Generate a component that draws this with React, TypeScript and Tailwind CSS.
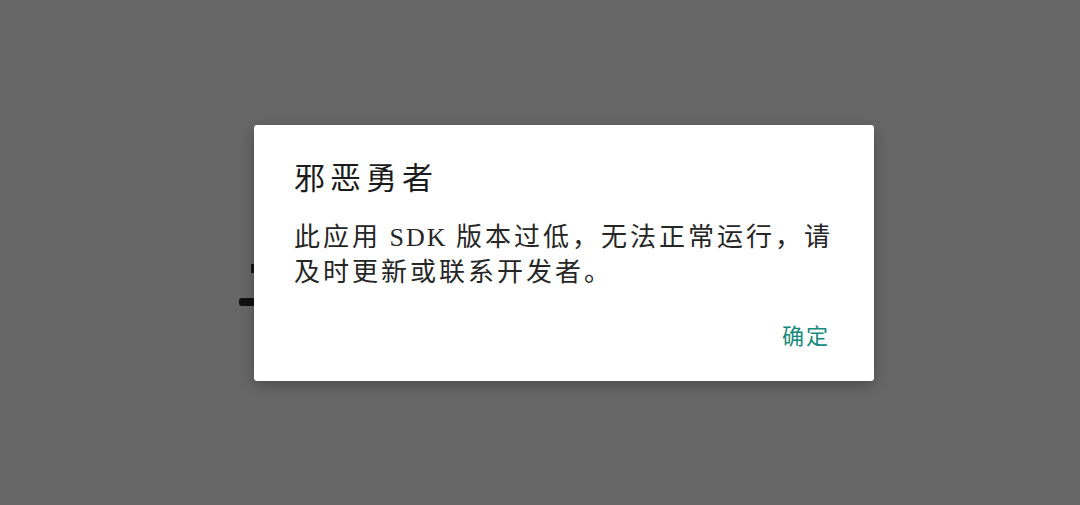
import React from "react";

export default function App() {
  const font = { fontFamily: '"Liberation Serif", "Noto Sans CJK SC", serif' };
  return (
    <div className="relative w-[1080px] h-[505px] overflow-hidden bg-[#676767]" style={font}>
      {/* glimpse of content under the dim layer */}
      <span className="absolute left-[251px] top-[264px] w-[4px] h-[9px] bg-[#141414]" />
      <span className="absolute left-[239px] top-[298px] w-[16px] h-[8px] rounded-l-[3px] bg-[#111]" />
      <div className="relative flex h-full items-center justify-center pl-[48px]">
        <div className="w-[620px] h-[256px] rounded-[3px] bg-white shadow-[0_4px_14px_rgba(0,0,0,0.28)] flex flex-col pl-[40px] pr-[44px] pt-[36px]">
          <div className="text-[31px] leading-[36px] tracking-[5px] text-[#1c1c1c] whitespace-nowrap">邪恶勇者</div>
          <div className="mt-[23px] text-[26px] leading-[35px] tracking-[3px] text-[#262626] whitespace-nowrap">
            <div>
              此应用<span className="tracking-[2px]"> SDK </span>版本过低，无法正常运行，请
            </div>
            <div>及时更新或联系开发者。</div>
          </div>
          <div className="mt-[32px] flex justify-end">
            <span className="text-[22px] leading-[30px] tracking-[2px] text-[#16897d]">确定</span>
          </div>
        </div>
      </div>
    </div>
  );
}
